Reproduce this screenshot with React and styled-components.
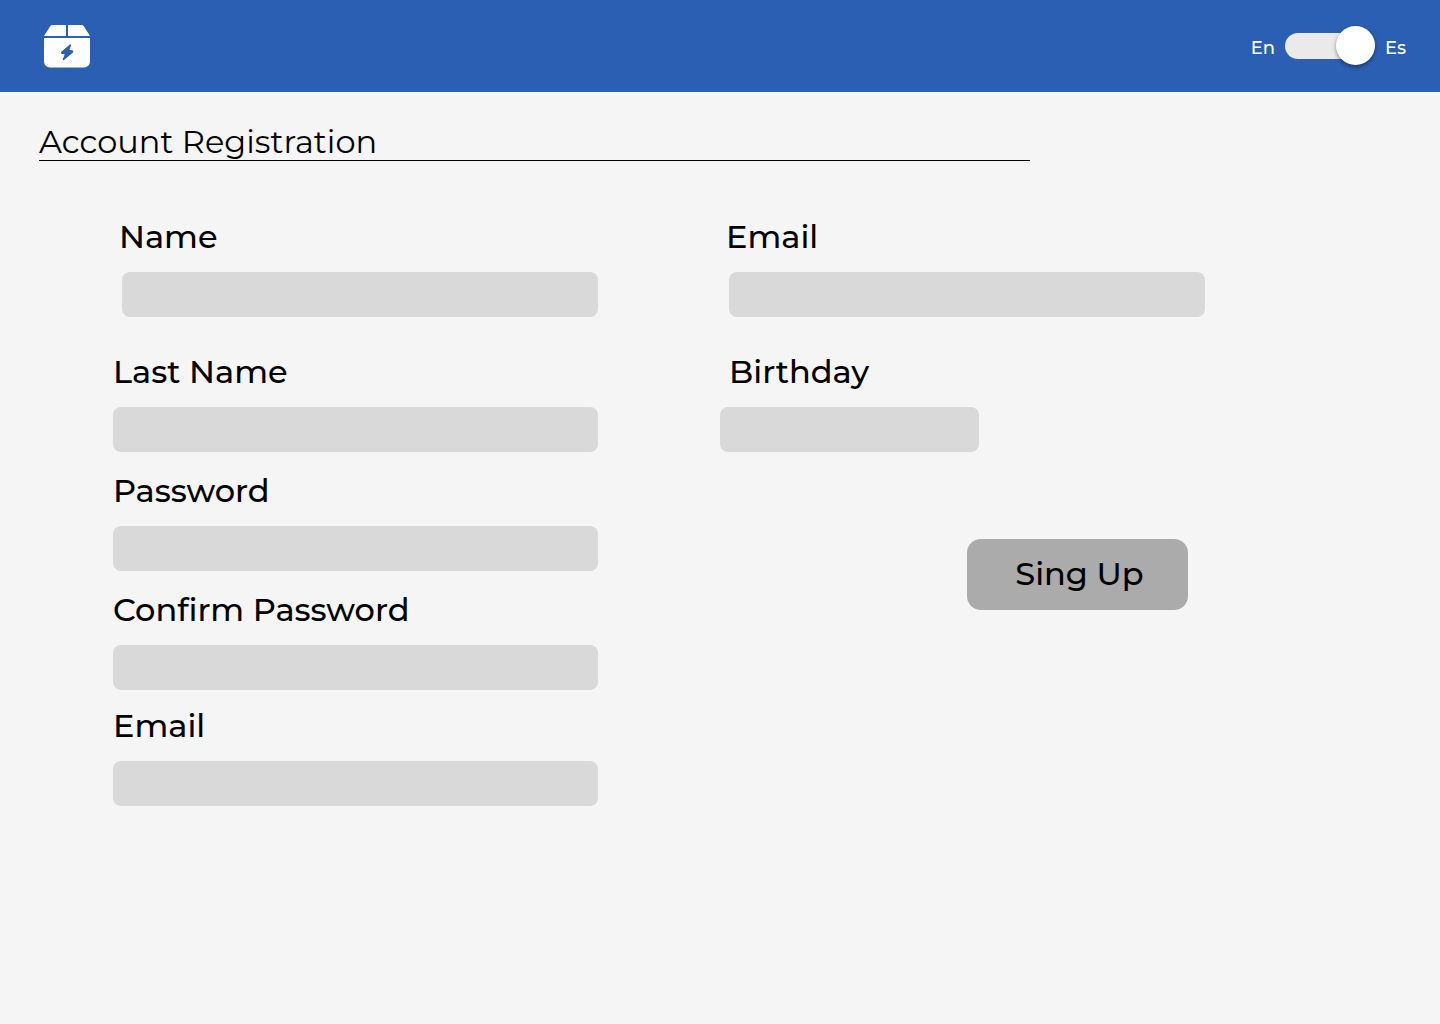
import React, { useState } from "react";
import styled, { createGlobalStyle } from "styled-components";

const GlobalStyle = createGlobalStyle`
  *, *::before, *::after { box-sizing: border-box; }
  body {
    margin: 0;
    background: #f5f5f5;
    color: #000;
    font-family: Montserrat, Inter, "Open Sans", sans-serif;
  }
`;

const Header = styled.header`
  display: flex;
  align-items: center;
  justify-content: space-between;
  height: 92px;
  padding: 0 34px 0 44px;
  background: #2a5fb4;
`;

const HomeLink = styled.a`
  display: block;
  line-height: 0;
`;

const LanguageSwitch = styled.div`
  display: flex;
  align-items: center;
  gap: 10px;
`;

const LanguageLabel = styled.label`
  padding-top: 3px;
  color: #fff;
  font-size: 18px;
  font-weight: 500;
  line-height: 24px;
`;

const Toggle = styled.input`
  appearance: none;
  position: relative;
  width: 90px;
  height: 26px;
  margin: 0;
  border-radius: 13px;
  background: linear-gradient(#eaeaea, #eaeaea) 0 0 / 78px 100% no-repeat;
  cursor: pointer;

  &::after {
    content: "";
    position: absolute;
    top: -7px;
    left: ${({ checked }) => (checked ? "51px" : "0")};
    width: 39px;
    height: 39px;
    border-radius: 50%;
    background: #fff;
    box-shadow: 0 2px 4px rgba(0, 0, 0, 0.4);
  }
`;

const Title = styled.h1`
  max-width: 991px;
  margin: 32px 39px 0;
  border-bottom: 1px solid #000;
  font-size: 32px;
  font-weight: 400;
  line-height: 36px;
`;

const Form = styled.form`
  display: grid;
  grid-template-columns: 1fr 1fr;
  align-items: start;
  column-gap: 122px;
  padding: 56px 235px 56px 113px;
`;

const Column = styled.div`
  display: flex;
  flex-direction: column;
`;

const fieldSpacing = { wide: 35, normal: 19, tight: 16 };

const Field = styled.div`
  display: flex;
  flex-direction: column;
  gap: 15px;
  padding-left: ${({ $inset }) => ($inset ? "9px" : "0")};
  margin-bottom: ${({ $spacing }) => fieldSpacing[$spacing]}px;
`;

const Label = styled.label`
  margin-left: ${({ $shift = 0 }) => $shift}px;
  font-size: 32px;
  font-weight: 500;
  line-height: 40px;
`;

const Input = styled.input`
  width: ${({ $short }) => ($short ? "259px" : "100%")};
  height: 45px;
  padding: 0 12px;
  border: 0;
  border-radius: 8px;
  background: #d9d9d9;
  color: #000;
  font: inherit;
  font-size: 18px;
`;

const SubmitButton = styled.button`
  align-self: flex-end;
  width: 221px;
  height: 71px;
  margin: 68px 17px 0 0;
  padding: 0 0 2px 4px;
  border: 0;
  border-radius: 14px;
  background: #ababab;
  color: #000;
  font-family: inherit;
  font-size: 32px;
  font-weight: 500;
  line-height: 40px;
  cursor: pointer;
`;

function BoxLogo() {
  return (
    <svg width="46" height="43" viewBox="0 0 46 43" fill="none" aria-hidden="true">
      <path d="M8.5 0H22v11H0L6 1.4Q6.9 0 8.5 0Z" fill="#fff" />
      <path d="M24 0H37.5Q39.1 0 40 1.4L46 11H24Z" fill="#fff" />
      <path d="M0 13H46V36.5A6 6 0 0 1 40 42.5H6A6 6 0 0 1 0 36.5Z" fill="#fff" />
      <path
        d="M26.3 20.2L17.8 27.3V28L21.8 28.8L19.5 34.4L28.5 27V26.2L24.4 25.2Z"
        fill="#2a5fb4"
        stroke="#2a5fb4"
        strokeWidth="1.5"
        strokeLinejoin="round"
      />
    </svg>
  );
}

function FormField({ id, label, type = "text", spacing = "normal", inset, shift, short }) {
  return (
    <Field $inset={inset} $spacing={spacing}>
      <Label htmlFor={id} $shift={shift}>{label}</Label>
      <Input id={id} name={id} type={type} $short={short} />
    </Field>
  );
}

export default function App() {
  const [spanish, setSpanish] = useState(true);

  return (
    <>
      <GlobalStyle />
      <Header>
        <HomeLink href="#" aria-label="Home">
          <BoxLogo />
        </HomeLink>
        <LanguageSwitch>
          <LanguageLabel htmlFor="language">En</LanguageLabel>
          <Toggle
            id="language"
            type="checkbox"
            role="switch"
            checked={spanish}
            onChange={(event) => setSpanish(event.target.checked)}
          />
          <LanguageLabel htmlFor="language">Es</LanguageLabel>
        </LanguageSwitch>
      </Header>
      <main>
        <Title>Account Registration</Title>
        <Form onSubmit={(event) => event.preventDefault()}>
          <Column>
            <FormField id="name" label="Name" spacing="wide" inset shift={-3} />
            <FormField id="lastName" label="Last Name" />
            <FormField id="password" label="Password" type="password" />
            <FormField id="confirmPassword" label="Confirm Password" type="password" spacing="tight" />
            <FormField id="confirmEmail" label="Email" type="email" />
          </Column>
          <Column>
            <FormField id="email" label="Email" type="email" spacing="wide" inset shift={-3} />
            <FormField id="birthday" label="Birthday" short shift={9} />
            <SubmitButton type="submit">Sing Up</SubmitButton>
          </Column>
        </Form>
      </main>
    </>
  );
}
